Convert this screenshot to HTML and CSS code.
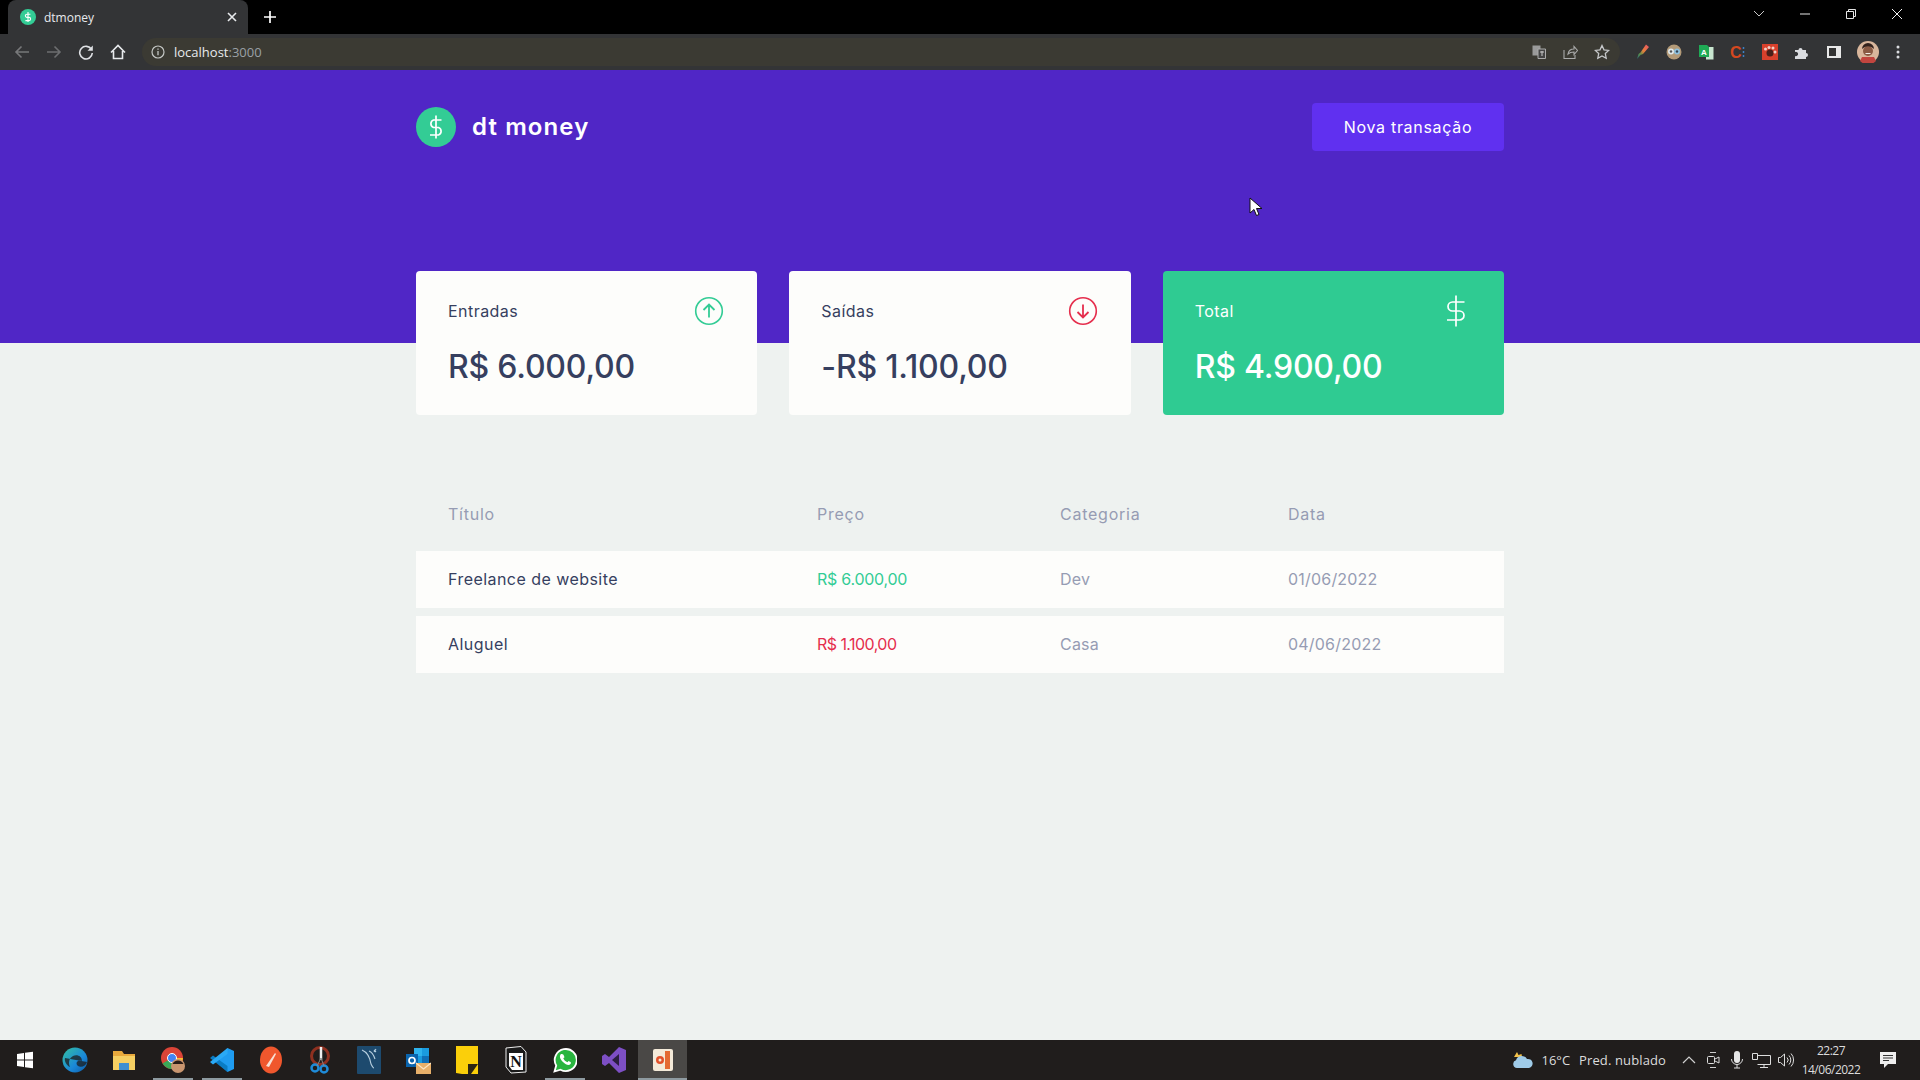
FILE: index.html
```html
<!DOCTYPE html>
<html lang="pt-BR">
<head>
    <meta charset="UTF-8">
    <title>dtmoney</title>
    <link rel="stylesheet" href="styles.css">
</head>
<body>

<div class="tabstrip">
    <div class="tab">
        <svg class="tab-favicon" width="16" height="16" viewBox="0 0 16 16"><circle cx="8" cy="8" r="8" fill="#33cc95"/><path d="M8 3v10M10.4 5.2H7a1.6 1.6 0 0 0 0 3.2h2a1.6 1.6 0 0 1 0 3.2H5.4" fill="none" stroke="#fff" stroke-width="1.1"/></svg>
        <span class="tab-title">dtmoney</span>
        <svg width="10" height="10" viewBox="0 0 10 10"><path d="M1 1l8 8M9 1l-8 8" stroke="#e8eaed" stroke-width="1.6"/></svg>
    </div>
    <svg class="new-tab" width="12" height="12" viewBox="0 0 12 12"><path d="M6 0v12M0 6h12" stroke="#fff" stroke-width="1.7"/></svg>
    <div class="window-controls">
        <svg width="46" height="14" viewBox="0 0 46 14"><path d="M18 4l5 5 5-5" fill="none" stroke="#c8c8c8"/></svg>
        <svg width="46" height="14" viewBox="0 0 46 14"><path d="M18 7h10" stroke="#e6e6e6"/></svg>
        <svg width="46" height="14" viewBox="0 0 46 14"><path d="M18.5 4.500h7v7h-7zM20.500 4.500v-2h7v7h-2" fill="none" stroke="#e6e6e6"/></svg>
        <svg width="46" height="14" viewBox="0 0 46 14"><path d="M18 2l10 10M28 2l-10 10" stroke="#f0f0f0"/></svg>
    </div>
</div>

<div class="toolbar">
    <div class="nav-buttons">
        <svg width="32" height="16" viewBox="0 0 32 16"><path d="M23 8H10M15.500 2.500L10 8l5.500 5.500" fill="none" stroke="#77787a" stroke-width="1.6"/></svg>
        <svg width="32" height="16" viewBox="0 0 32 16"><path d="M9 8h13M16.500 2.500L22 8l-5.500 5.500" fill="none" stroke="#6d6e70" stroke-width="1.6"/></svg>
        <svg width="32" height="16" viewBox="0 0 32 16"><path d="M21.500 5.500A6.300 6.300 0 1 0 22.300 9" fill="none" stroke="#dfe1e5" stroke-width="1.6"/><path d="M22.800 1.500v5.300h-5.300z" fill="#dfe1e5"/></svg>
        <svg width="32" height="16" viewBox="0 0 32 16"><path d="M9 8.500L16 1.500l7 7M11.500 7v7.500h9V7" fill="none" stroke="#e8eaed" stroke-width="1.6"/></svg>
    </div>
    <div class="omnibox">
        <svg width="14" height="14" viewBox="0 0 14 14"><circle cx="7" cy="7" r="6" fill="none" stroke="#c4c7c5" stroke-width="1.200"/><path d="M7 6v4.200M7 3.400v1.400" stroke="#c4c7c5" stroke-width="1.300"/></svg>
        <span class="url">localhost<span class="url-port">:3000</span></span>
        <div class="omnibox-actions">
            <svg width="14" height="14" viewBox="0 0 14 14"><rect x="0.500" y="0.500" width="8" height="10" fill="#9a9a9a"/><path d="M6 4h7.500v9.500H6z" fill="#444" stroke="#aaa"/><path d="M8 7h4M10 6v5" stroke="#ccc"/></svg>
            <svg width="16" height="16" viewBox="0 0 16 16"><path d="M2 6v8.500h11V11M6 10c.5-3 3-5 6-5V2.500l3.500 4-3.500 4V8c-2.500 0-4.500.5-6 2z" fill="none" stroke="#aaa" stroke-width="1.100"/></svg>
            <svg width="16" height="16" viewBox="0 0 16 16"><path d="M8 1.500l2 4.300 4.700.6-3.400 3.200.9 4.600L8 11.900l-4.200 2.300.9-4.600L1.300 6.400 6 5.800z" fill="none" stroke="#c6c8ca" stroke-width="1.300"/></svg>
        </div>
    </div>
    <div class="extensions">
        <svg width="16" height="16" viewBox="0 0 16 16"><defs><linearGradient id="brush" x1="1" y1="0" x2="0" y2="1"><stop offset="0" stop-color="#e8506a"/><stop offset="0.450" stop-color="#e8803a"/><stop offset="0.700" stop-color="#5c8f4a"/><stop offset="1" stop-color="#2a6a7a"/></linearGradient></defs><path d="M12 .5l3 2.500-6 7-2.500 1-3.500 4 1.500-5 2-1.500z" fill="url(#brush)"/></svg>
        <svg width="16" height="16" viewBox="0 0 16 16"><circle cx="8" cy="8" r="7.500" fill="#b39a78"/><circle cx="5" cy="7.500" r="3" fill="#dfe7ea"/><circle cx="11" cy="7.500" r="3" fill="#8fc0dd"/><circle cx="5" cy="7.500" r="1.200" fill="#555"/><circle cx="11" cy="7.500" r="1.200" fill="#345"/></svg>
        <svg width="16" height="16" viewBox="0 0 16 16"><path d="M8 3h7.500v12.500H8z" fill="#c8e6d0"/><path d="M1 1h8l2 2v10H1z" fill="#1faa55"/><text x="3" y="10.500" class="ext-letter">A</text></svg>
        <svg width="16" height="16" viewBox="0 0 16 16"><text x="0" y="14" class="ext-c">C</text><path d="M13.500 3v2M13.500 7v2M13.500 11v2" stroke="#3f7fc4" stroke-width="1.500"/></svg>
        <svg width="16" height="16" viewBox="0 0 16 16"><rect width="16" height="16" fill="#d8402c"/><circle cx="8" cy="9" r="3.500" fill="#4a1f1a"/><circle cx="3.500" cy="5" r="1.500" fill="#f0d0c8"/><circle cx="7" cy="3.500" r="1.500" fill="#f0d0c8"/><circle cx="11" cy="4" r="1.500" fill="#f0d0c8"/><circle cx="13" cy="8" r="1.500" fill="#f0d0c8"/></svg>
        <svg width="16" height="16" viewBox="0 0 16 16"><path d="M1 6h3.500a2 2 0 1 1 4 0H12v3a2 2 0 1 1 0 4v2H1v-3a2.200 2.200 0 1 0 0-4z" fill="#dadce0"/></svg>
        <svg width="16" height="16" viewBox="0 0 16 16"><rect x="1" y="2" width="14" height="12" fill="#e8e8e8"/><rect x="3" y="4" width="7" height="8" fill="#333"/></svg>
        <svg class="avatar" width="22" height="22" viewBox="0 0 22 22"><circle cx="11" cy="11" r="11" fill="#d9b69c"/><path d="M3 20a11 11 0 0 0 16 0l-2-4H5z" fill="#c2453f"/><circle cx="11" cy="10" r="5" fill="#8a5a44"/><path d="M5 8a6 6 0 0 1 12 0 8 8 0 0 0-12 0z" fill="#33211c"/><path d="M8.500 12.500h5" stroke="#f4eee8"/></svg>
        <svg class="menu-dots" width="4" height="16" viewBox="0 0 4 16"><circle cx="2" cy="3" r="1.500" fill="#dadce0"/><circle cx="2" cy="8" r="1.500" fill="#dadce0"/><circle cx="2" cy="13" r="1.500" fill="#dadce0"/></svg>
    </div>
</div>

<main class="page">
    <header class="hero">
        <div class="hero-content">
            <div class="logo">
                <svg width="40" height="40" viewBox="0 0 40 40"><circle cx="20" cy="20" r="20" fill="#33cc95"/><path d="M20 8.500v23M25.500 13H17.500a4 4 0 0 0 0 7.500h5a4 4 0 0 1 0 7.500H14" fill="none" stroke="#fff" stroke-width="1.700"/></svg>
                <span class="logo-text">dt money</span>
            </div>
            <button class="new-transaction">Nova transação</button>
        </div>
    </header>

    <div class="container">
        <section class="summary">
            <div class="card">
                <div class="card-header">
                    <span>Entradas</span>
                    <svg width="32" height="32" viewBox="0 0 32 32"><circle cx="16" cy="16" r="13.300" fill="none" stroke="#33cc95" stroke-width="1.600"/><path d="M16 22.500v-13M10.500 15L16 9.500l5.500 5.500" fill="none" stroke="#33cc95" stroke-width="1.800"/></svg>
                </div>
                <strong>R$ 6.000,00</strong>
            </div>
            <div class="card">
                <div class="card-header">
                    <span>Saídas</span>
                    <svg width="32" height="32" viewBox="0 0 32 32"><circle cx="16" cy="16" r="13.300" fill="none" stroke="#e52e4d" stroke-width="1.600"/><path d="M16 9.500v13M10.500 17l5.500 5.500 5.500-5.500" fill="none" stroke="#e52e4d" stroke-width="1.800"/></svg>
                </div>
                <strong>-R$ 1.100,00</strong>
            </div>
            <div class="card card-total">
                <div class="card-header">
                    <span>Total</span>
                    <svg width="32" height="32" viewBox="0 0 32 32"><path d="M16 .5v31M24.500 7H12.500a4.500 4.500 0 0 0 0 9h7a4.500 4.500 0 0 1 0 9H7" fill="none" stroke="#fff" stroke-width="1.700"/></svg>
                </div>
                <strong>R$ 4.900,00</strong>
            </div>
        </section>

        <table class="transactions">
            <colgroup>
                <col class="col-title"><col class="col-price"><col class="col-category"><col class="col-date">
            </colgroup>
            <thead>
                <tr><th>Título</th><th>Preço</th><th>Categoria</th><th>Data</th></tr>
            </thead>
            <tbody>
                <tr>
                    <td class="row-title">Freelance de website</td>
                    <td class="deposit">R$ 6.000,00</td>
                    <td>Dev</td>
                    <td>01/06/2022</td>
                </tr>
                <tr>
                    <td class="row-title">Aluguel</td>
                    <td class="withdraw">R$ 1.100,00</td>
                    <td>Casa</td>
                    <td>04/06/2022</td>
                </tr>
            </tbody>
        </table>
    </div>
</main>

<footer class="taskbar">
    <div class="start">
        <svg width="18" height="18" viewBox="0 0 18 18"><path d="M1 3l7-1v6.500H1zM9 1.800L17 .7v7.800H9zM1 9.500h7V16l-7-1zM9 9.500h8v7.800l-8-1.100z" fill="#fff"/></svg>
    </div>
    <div class="task">
        <svg width="26" height="26" viewBox="0 0 26 26"><defs><linearGradient id="edge" x1="0" y1="0" x2="1" y2="1"><stop offset="0" stop-color="#35c1a0"/><stop offset="0.600" stop-color="#1a88d8"/><stop offset="1" stop-color="#0c59a4"/></linearGradient></defs><circle cx="13" cy="13" r="12.500" fill="url(#edge)"/><path d="M25 15c-1 4-6 6-9 4-2-1.500-2-4 0-5 2-1 4 0 4 0 0-5-5-7-9-5-4 2-5 7-3 11-3-1-6-6-5-9" fill="#1c1c1c" opacity="0.750"/></svg>
    </div>
    <div class="task">
        <svg width="24" height="24" viewBox="0 0 24 24"><path d="M1 3h9l2 3h11v16H1z" fill="#e8a93c"/><path d="M1 8h22v14H1z" fill="#f5cf62"/><path d="M7 15h10v7H7z" fill="#3f8fd0"/></svg>
    </div>
    <div class="task is-running">
        <svg width="26" height="28" viewBox="0 0 26 28"><circle cx="12" cy="12" r="11" fill="#db4437"/><path d="M12 12L2.500 17.500A11 11 0 0 0 15 22.500z" fill="#3aa757"/><path d="M12 12l3 10.500A11 11 0 0 0 23 12z" fill="#fbc02d"/><circle cx="12" cy="12" r="4.500" fill="#4285f4" stroke="#fff"/><circle cx="18" cy="20" r="7" fill="#c9956f"/><path d="M12.500 18a6 6 0 0 1 11 0z" fill="#2a1c18"/></svg>
    </div>
    <div class="task is-running">
        <svg width="26" height="26" viewBox="0 0 26 26"><path d="M18.500 1L25 4v18l-6.500 3L7 14z" fill="#1f9cf0"/><path d="M18.500 1v24L1 11l3-2.500L18.500 19z" fill="#0a7cc4"/><path d="M1 15l3 2.500L18.500 7V1z" fill="#2aa9f5"/></svg>
    </div>
    <div class="task">
        <svg width="24" height="28" viewBox="0 0 24 28"><ellipse cx="12" cy="14" rx="11" ry="13.500" fill="#f0572d"/><path d="M7 20L16 7l1 1-7 13z" fill="#f8e0d4"/></svg>
    </div>
    <div class="task">
        <svg width="24" height="28" viewBox="0 0 24 28"><circle cx="12" cy="10" r="8.500" fill="none" stroke="#8f3020" stroke-width="3"/><path d="M13 1v13" stroke="#eee" stroke-width="2.500"/><circle cx="7" cy="22" r="3.500" fill="none" stroke="#1f8bd8" stroke-width="2.500"/><circle cx="16" cy="23" r="3.500" fill="none" stroke="#1f8bd8" stroke-width="2.500"/><path d="M9 20l4-8 3 8" fill="none" stroke="#888"/></svg>
    </div>
    <div class="task">
        <svg width="24" height="30" viewBox="0 0 24 30"><rect y="1" width="24" height="28" rx="1" fill="#1d4a6e"/><path d="M5 5c5 2 8 8 9 14 1 2 2 4 3 4M12 6c3 1 5 5 6 8M17 5l2 2M19 4l-2 3" fill="none" stroke="#b7cfdf" stroke-width="1.100"/></svg>
    </div>
    <div class="task">
        <svg width="26" height="28" viewBox="0 0 26 28"><rect x="9" y="2" width="15" height="18" fill="#1a9ce0"/><rect x="9" y="2" width="8" height="8" fill="#2fb4ee"/><rect x="17" y="10" width="7" height="8" fill="#0f70b8"/><rect x="1" y="8" width="12" height="13" fill="#0a64ad"/><circle cx="7" cy="14.500" r="3" fill="none" stroke="#fff" stroke-width="1.700"/><rect x="11" y="17" width="15" height="11" fill="#e8b06a"/><path d="M11 17l7.500 6 7.500-6" fill="none" stroke="#fbe6c3" stroke-width="1.200"/></svg>
    </div>
    <div class="task">
        <svg width="22" height="30" viewBox="0 0 22 30"><path d="M0 1h22v28H6l-6-1z" fill="#fbcf0a"/><path d="M12 19h10l-7 10h-3z" fill="#2c2512"/></svg>
    </div>
    <div class="task">
        <svg width="22" height="28" viewBox="0 0 22 28"><path d="M1 2l15-1.500L21 6v20L6 27 1 21z" fill="#1a1a1a" stroke="#eee"/><path d="M4 7h14v17H7l-3-4z" fill="#fff"/><text x="11" y="21" class="notion-letter" text-anchor="middle">N</text></svg>
    </div>
    <div class="task is-running">
        <svg width="24" height="26" viewBox="0 0 24 26"><path d="M1.500 24.500l1.700-6A11 11 0 1 1 7.500 22.700z" fill="#29b53f" stroke="#fff" stroke-width="1.800"/><path d="M8 7c-2 2-1 5 2 8s6 4 7.500 2c.8-1 .5-1.500 0-2l-2-1-1 1.200c-2-.7-3.500-2.200-4.200-4l1.200-1-1-2.400c-.6-1-1.700-1-2.500-.8z" fill="#fff"/></svg>
    </div>
    <div class="task">
        <svg width="24" height="28" viewBox="0 0 24 28"><path d="M17 1l7 3v20l-7 3L7 17l-4 3-3-2V10l3-2 4 3z" fill="#7d4fc4"/><path d="M17 8v12l-7-6z" fill="#2b1f40"/></svg>
    </div>
    <div class="task is-active">
        <svg width="22" height="24" viewBox="0 0 22 24"><rect x="1" y="1" width="20" height="22" rx="2" fill="#f4ead9"/><rect x="13" y="3" width="5" height="18" fill="#e46a32"/><circle cx="8" cy="12" r="4" fill="#e2512a"/><circle cx="8" cy="12" r="1.500" fill="#f4ead9"/></svg>
    </div>

    <div class="tray">
        <svg class="tray-weather" width="22" height="20" viewBox="0 0 22 20"><path d="M3 7l3-5 1.500 3 3-1 .5 3z" fill="#f2c14a"/><path d="M6 18a4 4 0 0 1-1-7.800A6 6 0 0 1 16 9a4.500 4.500 0 0 1 2 9z" fill="#9fcbe8"/></svg>
        <span class="tray-text">16°C</span>
        <span class="tray-text tray-forecast">Pred. nublado</span>
        <div class="tray-icons">
            <svg width="24" height="16" viewBox="0 0 24 16"><path d="M6 11l6-6 6 6" fill="none" stroke="#d0d0d0" stroke-width="1.200"/></svg>
            <svg width="24" height="16" viewBox="0 0 24 16"><path d="M9 .5h6M9 15.500h6" stroke="#ccc"/><rect x="6.500" y="4.500" width="7" height="7" rx="1" fill="none" stroke="#ddd"/><path d="M14 7l4-2v6l-4-2" fill="none" stroke="#ddd"/></svg>
            <svg width="24" height="18" viewBox="0 0 24 18"><rect x="9" y="0" width="6" height="12" rx="3" fill="#e6e6e6"/><path d="M6.500 8a5.500 5.500 0 0 0 11 0M12 13.500V17M9 17h6" fill="none" stroke="#ddd"/></svg>
            <svg width="24" height="16" viewBox="0 0 24 16"><path d="M3.500 1.500h5v6h-5zM8.500 3.500h13v9h-13M15 12.500v3M11 15.500h8" fill="none" stroke="#ddd"/></svg>
            <svg width="24" height="16" viewBox="0 0 24 16"><path d="M5.500 5.500h2l4-3.500v12l-4-3.500h-2z" fill="none" stroke="#ddd"/><path d="M14 5.500a3.500 3.500 0 0 1 0 5M16 3.500a6.500 6.500 0 0 1 0 9M18 1.500a9.500 9.500 0 0 1 0 13" fill="none" stroke="#ddd"/></svg>
        </div>
        <div class="clock">
            <span>22:27</span>
            <span>14/06/2022</span>
        </div>
        <svg class="tray-notify" width="18" height="18" viewBox="0 0 18 18"><path d="M1 1h16v12h-8l-4 4v-4H1z" fill="#eee"/><path d="M4 4.500h10M4 7h10M4 9.500h6" stroke="#333"/></svg>
    </div>
</footer>

<svg class="cursor" width="14" height="20" viewBox="0 0 14 20"><path d="M1 1v15l4-3.500 2.500 6 2.500-1-2.500-6H13z" fill="#fff" stroke="#111"/></svg>

</body>
</html>
```

FILE: styles.css
```css
* {
    box-sizing: border-box;
    margin: 0;
    padding: 0;
}
html, body {
    height: 100%;
    overflow: hidden;
}
body {
    display: flex;
    flex-direction: column;
    font-family: Inter, "Noto Sans", sans-serif;
    background-color: #eef2f0;
    color: #363f5f;
}
svg {
    display: block;
    flex-shrink: 0;
}

/* browser chrome */
.tabstrip {
    display: flex;
    align-items: center;
    height: 34px;
    padding-left: 8px;
    background-color: #000;
}
.tab {
    display: flex;
    align-items: center;
    width: 240px;
    height: 34px;
    padding: 0 11px 0 12px;
    background-color: #333436;
    border-radius: 8px 8px 0 0;
}
.tab-title {
    flex: 1;
    margin-left: 8px;
    font: 12px "Open Sans", sans-serif;
    color: #e8eaed;
}
.new-tab {
    margin-left: 16px;
}
.window-controls {
    display: flex;
    margin-left: auto;
    margin-bottom: 6px;
}
.toolbar {
    display: flex;
    align-items: center;
    height: 36px;
    padding-left: 6px;
    background-color: #333436;
}
.nav-buttons {
    display: flex;
}
.omnibox {
    display: flex;
    align-items: center;
    width: 1478px;
    height: 28px;
    margin-left: 8px;
    padding: 0 10px 0 9px;
    background-color: #3b3a33;
    border-radius: 14px;
}
.url {
    margin-left: 9px;
    font: 13px "Open Sans", sans-serif;
    color: #e8eaed;
}
.url-port {
    color: #9aa0a6;
}
.omnibox-actions {
    display: flex;
    align-items: center;
    gap: 16px;
    margin-left: auto;
}
.extensions {
    display: flex;
    align-items: center;
    gap: 16px;
    margin-left: 14px;
}
.extensions .avatar {
    margin-left: -1px;
}
.extensions .menu-dots {
    margin-left: 1px;
}
.ext-letter {
    font: bold 8px "Liberation Sans", sans-serif;
    fill: #fff;
}
.ext-c {
    font: bold 16px "Liberation Sans", sans-serif;
    fill: #d5481f;
}

/* page */
.page {
    flex: 1;
}
.hero {
    height: 273px;
    background-color: #5026c6;
}
.hero-content {
    display: flex;
    align-items: center;
    justify-content: space-between;
    width: 1088px;
    margin: 0 auto;
    padding-top: 33px;
}
.logo {
    display: flex;
    align-items: center;
    gap: 16px;
}
.logo-text {
    padding-bottom: 2px;
    font-size: 24px;
    font-weight: 600;
    letter-spacing: 1.1px;
    color: #fff;
}
.new-transaction {
    width: 192px;
    height: 48px;
    font: 400 16px Inter, sans-serif;
    letter-spacing: 0.7px;
    color: #fff;
    background-color: #6030f0;
    border: 0;
    border-radius: 4px;
}
.container {
    width: 1088px;
    margin: -72px auto 0;
}
.summary {
    display: grid;
    grid-template-columns: repeat(3, 1fr);
    gap: 32px;
}
.card {
    height: 144px;
    padding: 24px 32px;
    background-color: #fdfdfb;
    border-radius: 4px;
}
.card-header {
    display: flex;
    align-items: center;
    justify-content: space-between;
    height: 32px;
    font-size: 16px;
    letter-spacing: 0.45px;
}
.card strong {
    display: block;
    margin-top: 16px;
    font-size: 32px;
    font-weight: 500;
    line-height: 48px;
    letter-spacing: -0.2px;
}
.card-total {
    color: #fff;
    background-color: #2fcb92;
}
.transactions {
    width: 100%;
    margin-top: 64px;
    table-layout: fixed;
    border-spacing: 0 8px;
    font-size: 16px;
}
.col-title { width: 369px; }
.col-price { width: 243px; }
.col-category { width: 228px; }
.col-date { width: 248px; }
.transactions th {
    height: 56px;
    padding: 0 32px 2px;
    font-weight: 400;
    line-height: 24px;
    letter-spacing: 0.75px;
    text-align: left;
    color: #969cb3;
}
.transactions td {
    height: 57px;
    padding: 0 32px 2px;
    letter-spacing: 0.2px;
    color: #969cb3;
    background-color: #fdfdfb;
}
.transactions .row-title {
    letter-spacing: 0.45px;
    color: #363f5f;
}
.transactions .deposit {
    letter-spacing: -0.25px;
    color: #33cc95;
}
.transactions .withdraw {
    letter-spacing: -0.55px;
    color: #e52e4d;
}

/* windows taskbar */
.taskbar {
    display: flex;
    align-items: stretch;
    height: 40px;
    background-color: #201d1c;
}
.start {
    display: flex;
    align-items: center;
    justify-content: center;
    width: 50px;
}
.task {
    display: flex;
    align-items: center;
    justify-content: center;
    width: 49px;
}
.task.is-running {
    background: linear-gradient(#8e9aa0, #8e9aa0) center bottom / 40px 2px no-repeat;
}
.task.is-active {
    background: linear-gradient(#8e9aa0, #8e9aa0) center bottom / 100% 2px no-repeat #4a4846;
}
.notion-letter {
    font: bold 16px "Liberation Serif", serif;
    fill: #111;
}
.tray {
    display: flex;
    align-items: center;
    margin-left: auto;
    font-family: "Open Sans", sans-serif;
    color: #dcdcdc;
}
.tray-text {
    margin-left: 8px;
    font-size: 13px;
}
.tray-forecast {
    margin-left: 9px;
    letter-spacing: 0.12px;
}
.tray-icons {
    display: flex;
    align-items: center;
    margin-left: 11px;
}
.clock {
    display: flex;
    flex-direction: column;
    align-items: center;
    width: 68px;
    font-size: 12px;
    line-height: 19px;
    letter-spacing: -0.5px;
}
.tray-notify {
    margin-left: 14px;
    margin-right: 23px;
}
.cursor {
    position: absolute;
    left: 1249px;
    top: 197px;
}
```
